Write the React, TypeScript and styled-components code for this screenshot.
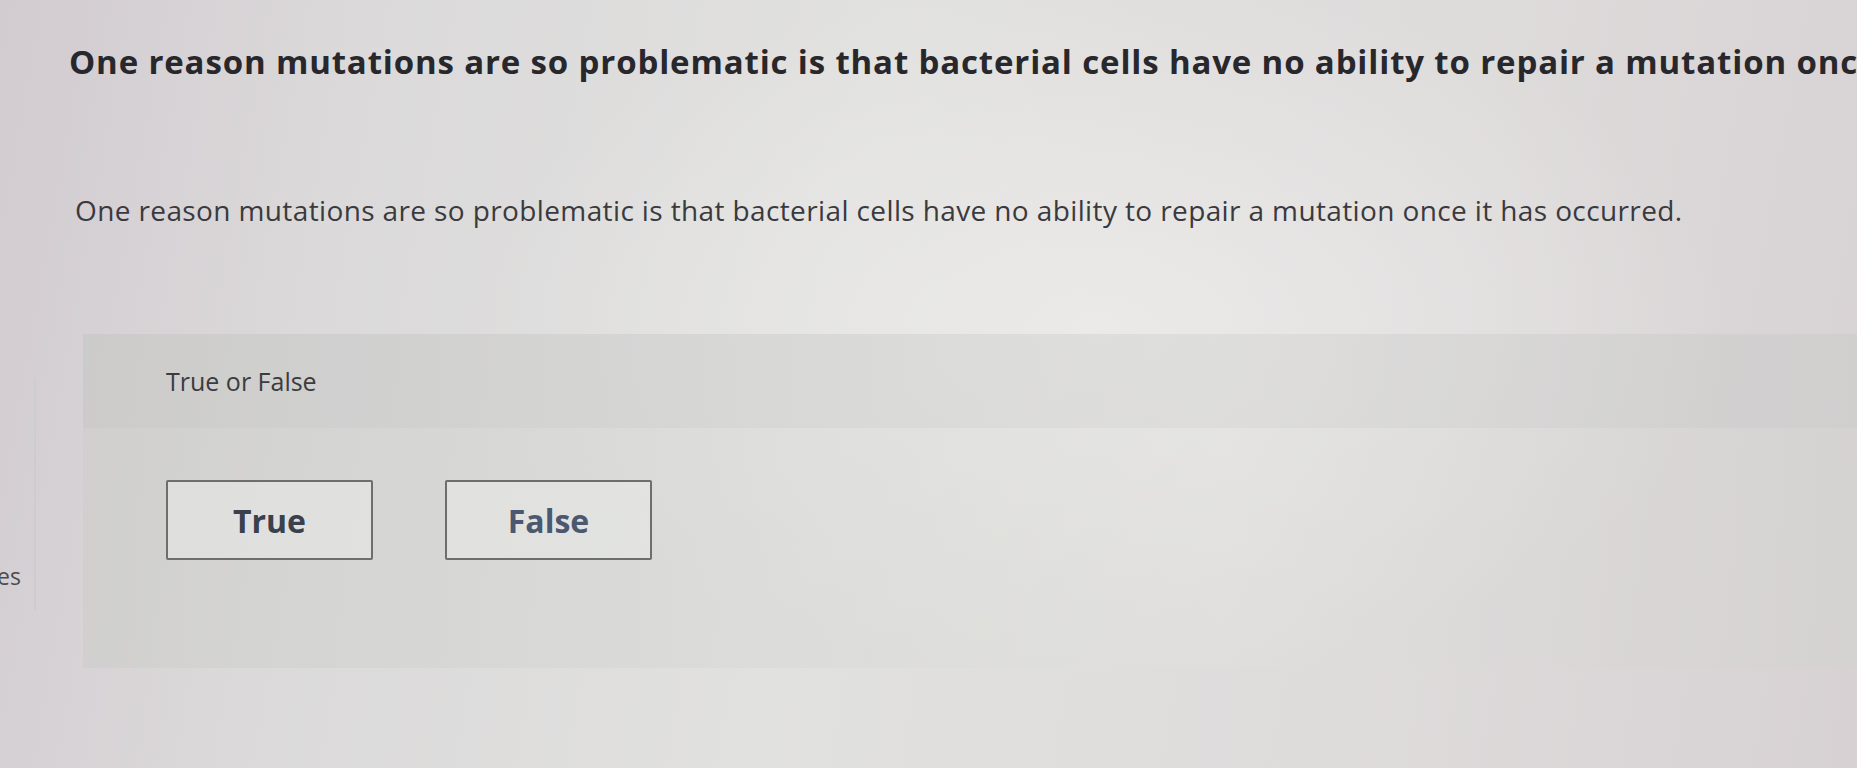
import React from "react";
import styled, { createGlobalStyle } from "styled-components";

const Global = createGlobalStyle`
  html, body { margin: 0; padding: 0; }
  body {
    width: 1857px;
    height: 768px;
    overflow: hidden;
    font-family: "Open Sans", Lato, "Liberation Sans", sans-serif;
    background: #dddbdb;
  }
`;

const Page = styled.div`
  position: relative;
  width: 1857px;
  height: 768px;
  overflow: hidden;
  background:
    radial-gradient(ellipse 900px 500px at 1100px 330px, rgba(236, 235, 234, 0.9), rgba(236, 235, 234, 0) 70%),
    linear-gradient(100deg, #d2cbd0 0%, #dbd9da 18%, #e1e1df 45%, #dedbdb 75%, #d7d1d3 100%);
  display: grid;
  grid-template-columns: 36px 1fr;
`;

const Sidebar = styled.aside`
  border-right: 2px solid #cdcdcb;
  margin-top: 378px;
  height: 232px;
  display: flex;
  flex-direction: column;
  justify-content: flex-end;
  padding-bottom: 22px;
  box-sizing: border-box;
`;

const SideLabel = styled.span`
  font-size: 23px;
  color: #4a4a4e;
  margin-left: -3px;
  line-height: 1;
`;

const Main = styled.main`
  display: flex;
  flex-direction: column;
  padding-top: 40px;
`;

const Heading = styled.h1`
  margin: 0 0 0 33px;
  font-size: 33px;
  font-weight: 700;
  color: #28282c;
  white-space: nowrap;
  letter-spacing: 0.85px;
  line-height: 44px;
`;

const Prompt = styled.p`
  margin: 108px 0 0 39px;
  font-size: 28px;
  font-weight: 400;
  color: #3a3a3e;
  white-space: nowrap;
  letter-spacing: 0.38px;
  line-height: 36px;
`;

const Panel = styled.section`
  margin: 106px 0 0 47px;
  height: 334px;
  background: linear-gradient(90deg, rgba(203, 205, 201, 0.55), rgba(224, 225, 222, 0.35) 55%, rgba(206, 207, 203, 0.55));
  display: flex;
  flex-direction: column;
`;

const PanelHeader = styled.div`
  height: 94px;
  background: rgba(188, 190, 186, 0.18);
  display: flex;
  align-items: center;
  padding-left: 83px;
`;

const PanelLabel = styled.span`
  font-size: 25px;
  color: #3c3c40;
`;

const Choices = styled.div`
  display: flex;
  gap: 72px;
  padding: 52px 0 0 83px;
`;

const Choice = styled.button<{ $tone: string }>`
  width: 207px;
  height: 80px;
  box-sizing: border-box;
  border: 2px solid #6c6e70;
  border-radius: 2px;
  background: rgba(232, 233, 230, 0.6);
  font-family: "Open Sans", Lato, "Liberation Sans", sans-serif;
  font-size: 32px;
  font-weight: 700;
  color: ${(p) => p.$tone};
  cursor: pointer;
  display: flex;
  align-items: center;
  justify-content: center;
`;

export default function App() {
  return (
    <>
      <Global />
      <Page>
        <Sidebar>
          <SideLabel>es</SideLabel>
        </Sidebar>
        <Main>
          <Heading>
            One reason mutations are so problematic is that bacterial cells have no ability to repair a mutation once it has occurred.
          </Heading>
          <Prompt>
            One reason mutations are so problematic is that bacterial cells have no ability to repair a mutation once it has occurred.
          </Prompt>
          <Panel>
            <PanelHeader>
              <PanelLabel>True or False</PanelLabel>
            </PanelHeader>
            <Choices>
              <Choice $tone="#3a404c">True</Choice>
              <Choice $tone="#4a5870">False</Choice>
            </Choices>
          </Panel>
        </Main>
      </Page>
    </>
  );
}
